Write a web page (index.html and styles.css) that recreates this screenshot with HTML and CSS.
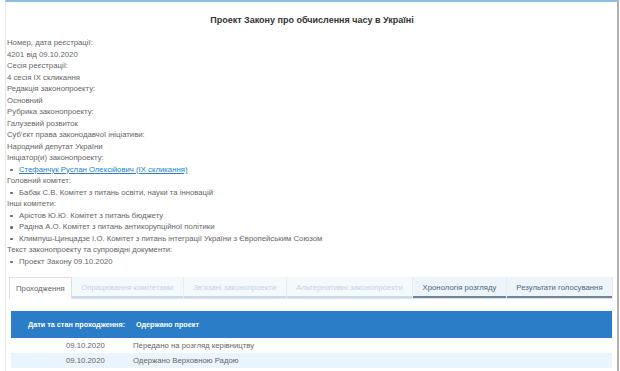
FILE: index.html
```html
<!DOCTYPE html>
<html lang="uk">
<head>
    <meta charset="UTF-8">
    <meta name="viewport" content="width=device-width, initial-scale=1.0">
    <title>Проект Закону про обчислення часу в Україні</title>
    <link rel="stylesheet" href="styles.css">
</head>
<body>
    <div class="page">
        <h1>Проект Закону про обчислення часу в Україні</h1>

        <div class="info">
            <div class="label">Номер, дата реєстрації:</div>
            <div>4201 від 09.10.2020</div>
            <div class="label">Сесія реєстрації:</div>
            <div>4 сесія IX скликання</div>
            <div class="label">Редакція законопроекту:</div>
            <div>Основний</div>
            <div class="label">Рубрика законопроекту:</div>
            <div>Галузевий розвиток</div>
            <div class="label">Суб'єкт права законодавчої ініціативи:</div>
            <div>Народний депутат України</div>
            <div class="label">Ініціатор(и) законопроекту:</div>
            <ul>
                <li><a href="#">Стефанчук Руслан Олексійович (IX скликання)</a></li>
            </ul>
            <div class="label">Головний комітет:</div>
            <ul>
                <li>Бабак С.В. Комітет з питань освіти, науки та інновацій</li>
            </ul>
            <div class="label">Інші комітети:</div>
            <ul>
                <li>Арістов Ю.Ю. Комітет з питань бюджету</li>
                <li>Радіна А.О. Комітет з питань антикорупційної політики</li>
                <li>Климпуш-Цинцадзе І.О. Комітет з питань інтеграції України з Європейським Союзом</li>
            </ul>
            <div class="label">Текст законопроекту та супровідні документи:</div>
            <ul>
                <li>Проект Закону 09.10.2020</li>
            </ul>
        </div>

        <div class="tabs">
            <div class="tab active">Проходження</div>
            <div class="tab disabled">Опрацювання комітетами</div>
            <div class="tab disabled">Зв'язані законопроекти</div>
            <div class="tab disabled">Альтернативні законопроекти</div>
            <div class="tab marked">Хронологія розгляду</div>
            <div class="tab marked">Результати голосування</div>
        </div>

        <div class="passage">
            <div class="passage-head">
                <div class="col-date">Дати та стан проходження:</div>
                <div class="col-text">Одержано проект</div>
            </div>
            <div class="row">
                <div class="col-date">09.10.2020</div>
                <div class="col-text">Передано на розгляд керівництву</div>
            </div>
            <div class="row odd">
                <div class="col-date">09.10.2020</div>
                <div class="col-text">Одержано Верховною Радою</div>
            </div>
        </div>
    </div>
</body>
</html>
```

FILE: styles.css
```css
body {
    margin: 0;
    font-family: "Liberation Sans", Arial, sans-serif;
    font-size: 7.75px;
    color: #666;
    background: #fff;
}
.page {
    border-top: 2px solid #8fbde0;
    border-left: 1px solid #e6e6e6;
    border-right: 2px solid #b0b0b0;
    margin: 0 1px 0 5px;
    padding: 0 0 0 1px;
    height: 369px;
    overflow: hidden;
}
h1 {
    margin: 0;
    padding: 13px 0 12px;
    font-size: 9px;
    color: #333;
    text-align: center;
}
.info {
    line-height: 11.5px;
}
ul {
    margin: 0;
    padding: 0 0 0 12px;
    list-style: none;
}
li {
    position: relative;
}
li::before {
    content: "";
    position: absolute;
    left: -9px;
    top: 5px;
    width: 2.5px;
    height: 2.5px;
    border-radius: 50%;
    background: #666;
}
a {
    color: #2a7dc6;
}
.tabs {
    display: flex;
    margin: 10px 4px 0 2px;
    height: 21px;
    background: #f4f9fc;
    border-bottom: 1px solid #d7e4ee;
}
.tab {
    flex: 1 1 auto;
    text-align: center;
    white-space: nowrap;
    padding: 0 6px;
    line-height: 21px;
    border-right: 1px solid #e4edf3;
    box-shadow: inset 0 -2px 0 #c9d9e5;
}
.tab.active {
    flex: 0 0 auto;
    background: #fff;
    box-shadow: none;
    border: 1px solid #e0e0e0;
    border-bottom: none;
    margin-bottom: -1px;
}
.tab.disabled {
    color: #c6d3dc;
}
.tab.marked {
    color: #4d6577;
    background: #eef5fa;
    box-shadow: inset 0 -2px 0 #6f8698;
}
.passage {
    margin: 12px 5px 0 4px;
}
.passage-head {
    display: flex;
    height: 27px;
    line-height: 27px;
    background: #2a7dc6;
    color: #fff;
    font-weight: bold;
    font-size: 7.25px;
    white-space: nowrap;
}
.passage-head .col-date {
    flex: 0 0 125px;
    box-sizing: border-box;
    padding-left: 17px;
}
.row {
    display: flex;
    line-height: 15px;
    white-space: nowrap;
}
.row.odd {
    background: #eaf4fc;
}
.row .col-date {
    flex: 0 0 122px;
    box-sizing: border-box;
    padding-left: 55px;
}
```
